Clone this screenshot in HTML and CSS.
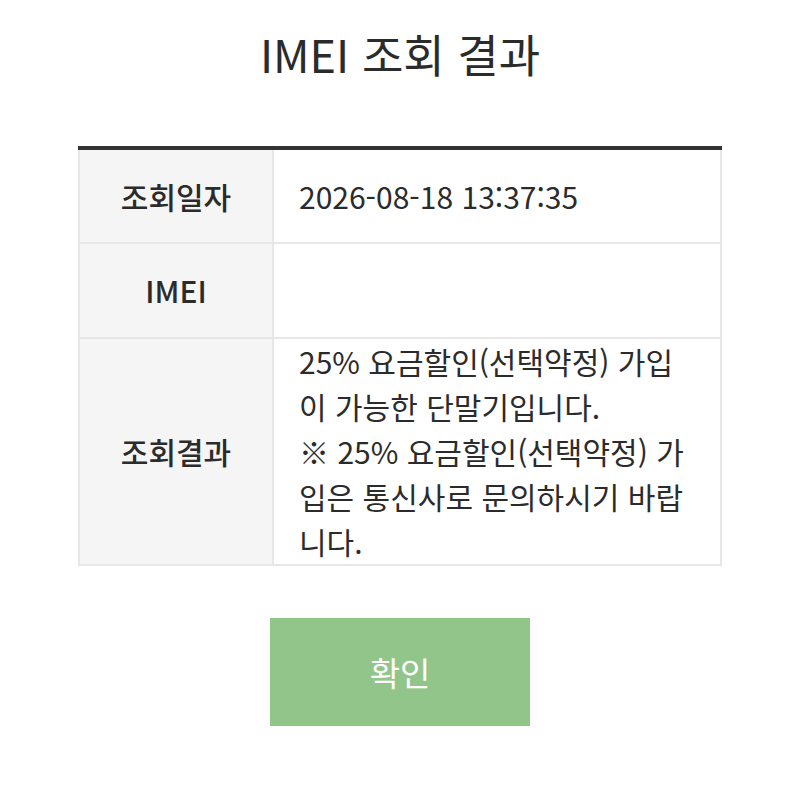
FILE: index.html
```html
<!DOCTYPE html>
<html lang="ko">
<head>
  <meta charset="UTF-8" />
  <meta name="viewport" content="width=device-width, initial-scale=1.0" />
  <title>IMEI 조회 결과</title>
  <link rel="stylesheet" href="styles.css">
</head>
<body>

  <!-- 조회 결과 -->
  <div class="wrap">
    <h1 class="title">IMEI 조회 결과</h1>

    <table class="result-table">
      <tr>
        <th>조회일자</th>
        <td>2026-08-18 13:37:35</td>
      </tr>
      <tr>
        <th>IMEI</th>
        <td></td>
      </tr>
      <tr class="row-result">
        <th>조회결과</th>
        <td>25% 요금할인(선택약정) 가입이 가능한 단말기입니다.<br>※ 25% 요금할인(선택약정) 가입은 통신사로 문의하시기 바랍니다.</td>
      </tr>
    </table>

    <div class="btn-area">
      <button class="btn-ok" type="button">확인</button>
    </div>
  </div>

</body>
</html>
```

FILE: styles.css
```css
* {
  box-sizing: border-box;
  margin: 0;
  padding: 0;
}

body {
  font-family: "Noto Sans CJK KR", "Noto Sans", sans-serif;
  background: #fff;
  color: #2b2b2b;
}

.wrap {
  width: 644px;
  margin: 0 auto;
}

.title {
  font-size: 45px;
  font-weight: 400;
  text-align: center;
  line-height: 60px;
  padding-top: 24px;
  margin-bottom: 62px;
}

/* --- TABLE --- */
.result-table {
  width: 100%;
  border-collapse: collapse;
  border-top: 4px solid #333;
  font-size: 30px;
  line-height: 45px;
}

.result-table th,
.result-table td {
  border: 2px solid #e7e7e7;
  height: 95px;
  vertical-align: middle;
}

.result-table th {
  width: 194px;
  background: #f5f5f5;
  font-weight: 500;
  text-align: center;
}

.result-table td {
  padding: 0 25px;
  font-weight: 400;
  word-break: break-all;
}

.result-table tr:first-child th,
.result-table tr:first-child td {
  border-top: none;
}

/* --- BUTTON --- */
.btn-area {
  display: flex;
  justify-content: center;
  padding-top: 52px;
}

.btn-ok {
  width: 260px;
  height: 108px;
  border: none;
  background: #92c58a;
  color: #fff;
  font-family: inherit;
  font-size: 33px;
  cursor: pointer;
}
```
